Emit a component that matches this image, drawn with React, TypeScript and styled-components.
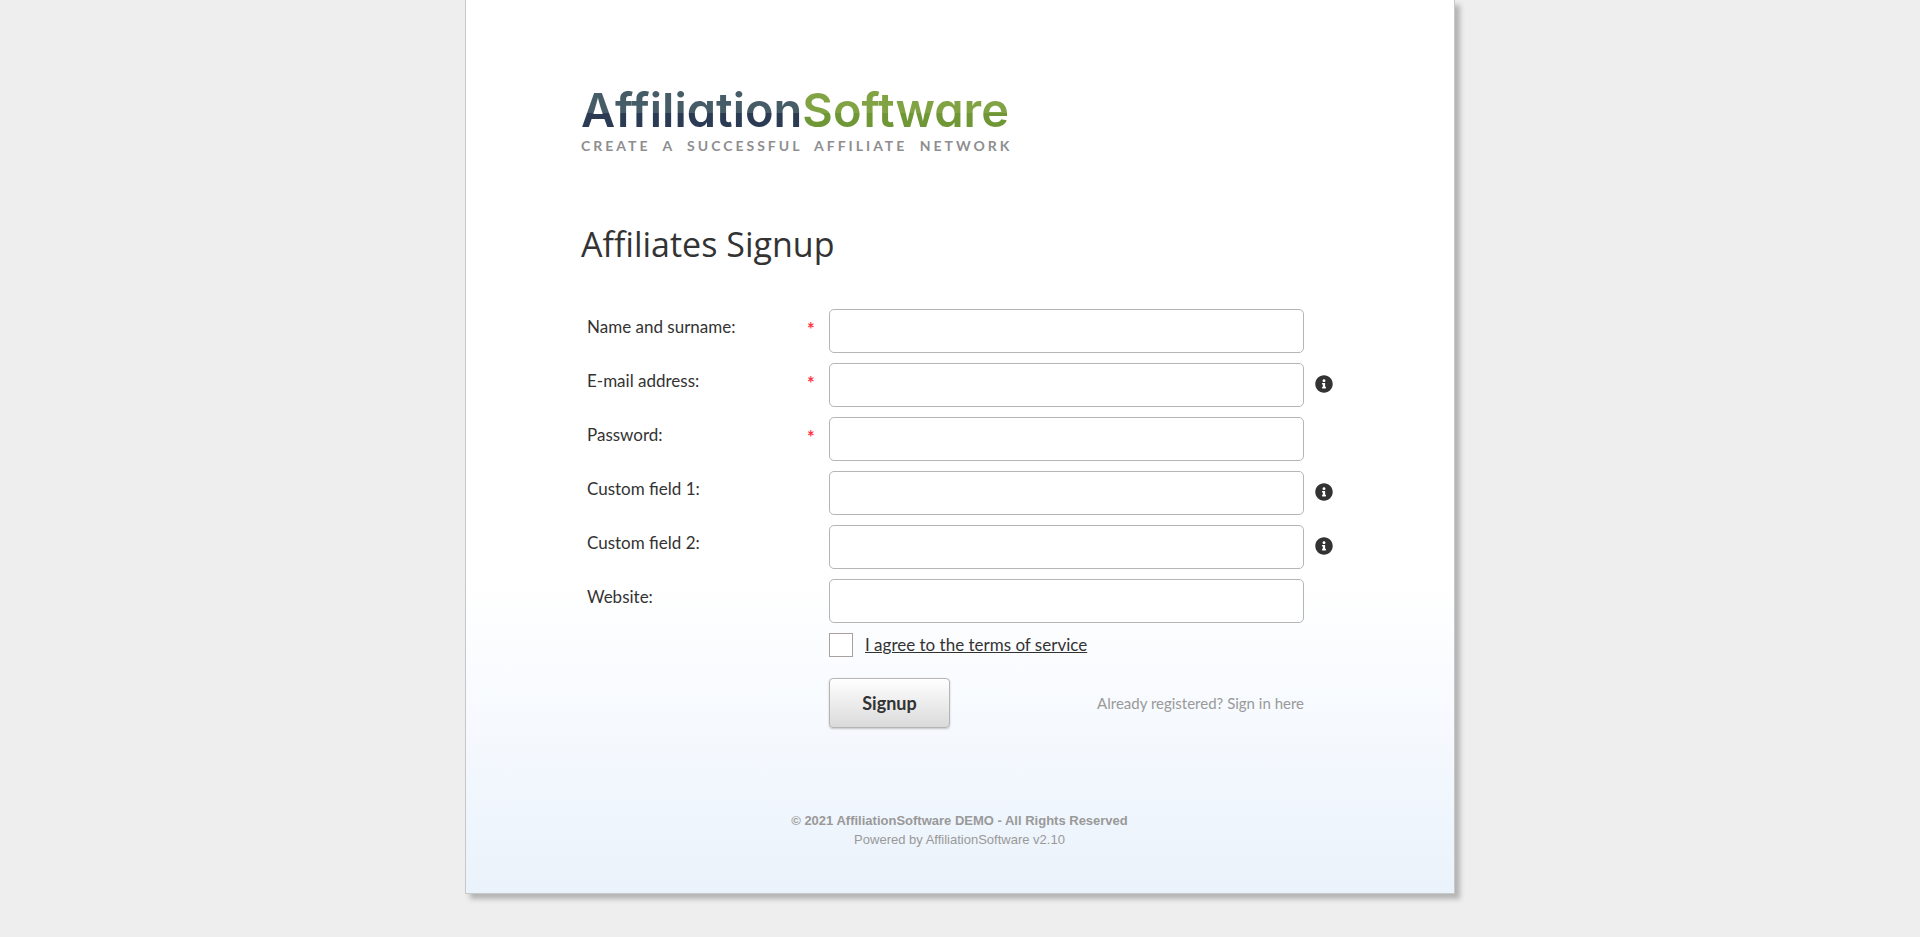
import React from 'react';
import styled, { createGlobalStyle } from 'styled-components';
import { FaInfoCircle } from 'react-icons/fa';

const GlobalStyle = createGlobalStyle`
  *, *::before, *::after { box-sizing: border-box; }
  body {
    margin: 0;
    background: #eeeeee;
    color: #333333;
    font-family: Lato, "Open Sans", sans-serif;
    font-size: 17px;
    line-height: 24px;
  }
`;

const Panel = styled.main`
  max-width: 990px;
  margin: 0 auto 44px;
  padding: 86px 116px 44px 115px;
  border: 1px solid #c8c8c8;
  border-top: 0;
  background: #ffffff linear-gradient(to bottom, #ffffff, #f5f9fe 50%, #eaf2fb) bottom / 100% 310px no-repeat;
  box-shadow: 5px 5px 5px #b4b4b4;
`;

const Brand = styled.div`
  display: flex;
  flex-direction: column;
  align-items: flex-start;
  gap: 3px;
`;

const Wordmark = styled.div`
  display: flex;
  font-family: Inter, sans-serif;
  font-size: 47px;
  font-weight: 600;
  font-feature-settings: "cv11";
  line-height: 48px;
  white-space: nowrap;
`;

const WordPart = styled.span<{ $top: string; $bottom: string }>`
  color: transparent;
  background: linear-gradient(${p => p.$top} 56%, ${p => p.$bottom} 56%);
  background-clip: text;
  -webkit-background-clip: text;
`;

const Tagline = styled.div`
  font-size: 14px;
  font-weight: 700;
  line-height: 18px;
  letter-spacing: 3px;
  word-spacing: 6px;
  color: #8e8e90;
  white-space: nowrap;
`;

const Title = styled.h1`
  margin: 65px 0 41px;
  font-family: "Open Sans", sans-serif;
  font-size: 34px;
  font-weight: 400;
  line-height: 48px;
`;

const Form = styled.form`
  display: flex;
  flex-direction: column;
  gap: 10px;
  padding-left: 6px;
`;

const Row = styled.div`
  display: grid;
  grid-template-columns: 220px 22px minmax(0, 475px) 1fr;
`;

const Label = styled.label`
  padding-top: 6px;
`;

const Required = styled.span`
  padding-top: 8px;
  color: #ff3344;
  font-size: 18px;
  font-weight: 700;
`;

const Field = styled.input`
  width: 100%;
  height: 44px;
  padding: 0 12px;
  border: 1px solid #b5b5b5;
  border-radius: 5px;
  background: #ffffff;
  color: inherit;
  font: inherit;
`;

const InfoButton = styled.button`
  align-self: start;
  justify-self: start;
  display: flex;
  margin: 12px 0 0 11px;
  padding: 0;
  border: 0;
  background: none;
  color: #333333;
`;

const Actions = styled.div`
  padding-left: 242px;
  max-width: 717px;
`;

const Terms = styled.div`
  display: flex;
  align-items: center;
  gap: 12px;
`;

const Checkbox = styled.input`
  appearance: none;
  width: 24px;
  height: 24px;
  margin: 0;
  border: 1px solid #aaa0a0;
  background: #ffffff;
  &:checked { background: #333333; box-shadow: inset 0 0 0 5px #ffffff; }
`;

const TermsLink = styled.a`
  color: #333333;
`;

const SubmitRow = styled.div`
  display: flex;
  align-items: center;
  justify-content: space-between;
  margin-top: 21px;
`;

const Submit = styled.button`
  width: 121px;
  height: 50px;
  padding: 0;
  border: 1px solid #b5b5b5;
  border-radius: 4px;
  background: linear-gradient(#ffffff, #dadada);
  box-shadow: 0 1px 2px #c4c4c4;
  color: #333333;
  font: inherit;
  font-size: 18px;
  font-weight: 700;
`;

const SignInLink = styled.a`
  color: #999999;
  font-size: 15px;
  text-decoration: none;
`;

const Footer = styled.footer`
  margin-top: 83px;
  color: #999999;
  font-family: "Liberation Sans", Arial, sans-serif;
  font-size: 13px;
  line-height: 19px;
  text-align: center;
`;

const Line = styled.div<{ $bold?: boolean }>`
  font-weight: ${p => (p.$bold ? 700 : 400)};
`;

const fields = [
  { id: 'name', label: 'Name and surname:', type: 'text', required: true, info: false },
  { id: 'email', label: 'E-mail address:', type: 'email', required: true, info: true },
  { id: 'password', label: 'Password:', type: 'password', required: true, info: false },
  { id: 'custom1', label: 'Custom field 1:', type: 'text', required: false, info: true },
  { id: 'custom2', label: 'Custom field 2:', type: 'text', required: false, info: true },
  { id: 'website', label: 'Website:', type: 'text', required: false, info: false },
];

export default function App() {
  return (
    <>
      <GlobalStyle />
      <Panel>
        <Brand>
          <Wordmark>
            <WordPart $top="#465c66" $bottom="#2a3b53">Affiliation</WordPart>
            <WordPart $top="#82a343" $bottom="#6f9735">Software</WordPart>
          </Wordmark>
          <Tagline>CREATE A SUCCESSFUL AFFILIATE NETWORK</Tagline>
        </Brand>
        <Title>Affiliates Signup</Title>
        <Form onSubmit={e => e.preventDefault()}>
          {fields.map(f => (
            <Row key={f.id}>
              <Label htmlFor={f.id}>{f.label}</Label>
              <Required>{f.required ? '*' : ''}</Required>
              <Field id={f.id} type={f.type} required={f.required} />
              {f.info && (
                <InfoButton type="button" aria-label="More information">
                  <FaInfoCircle size={18} />
                </InfoButton>
              )}
            </Row>
          ))}
          <Actions>
            <Terms>
              <Checkbox id="terms" type="checkbox" aria-labelledby="terms-text" />
              <TermsLink id="terms-text" href="#terms">I agree to the terms of service</TermsLink>
            </Terms>
            <SubmitRow>
              <Submit type="submit">Signup</Submit>
              <SignInLink href="#signin">Already registered? Sign in here</SignInLink>
            </SubmitRow>
          </Actions>
        </Form>
        <Footer>
          <Line $bold>© 2021 AffiliationSoftware DEMO - All Rights Reserved</Line>
          <Line>Powered by AffiliationSoftware v2.10</Line>
        </Footer>
      </Panel>
    </>
  );
}
